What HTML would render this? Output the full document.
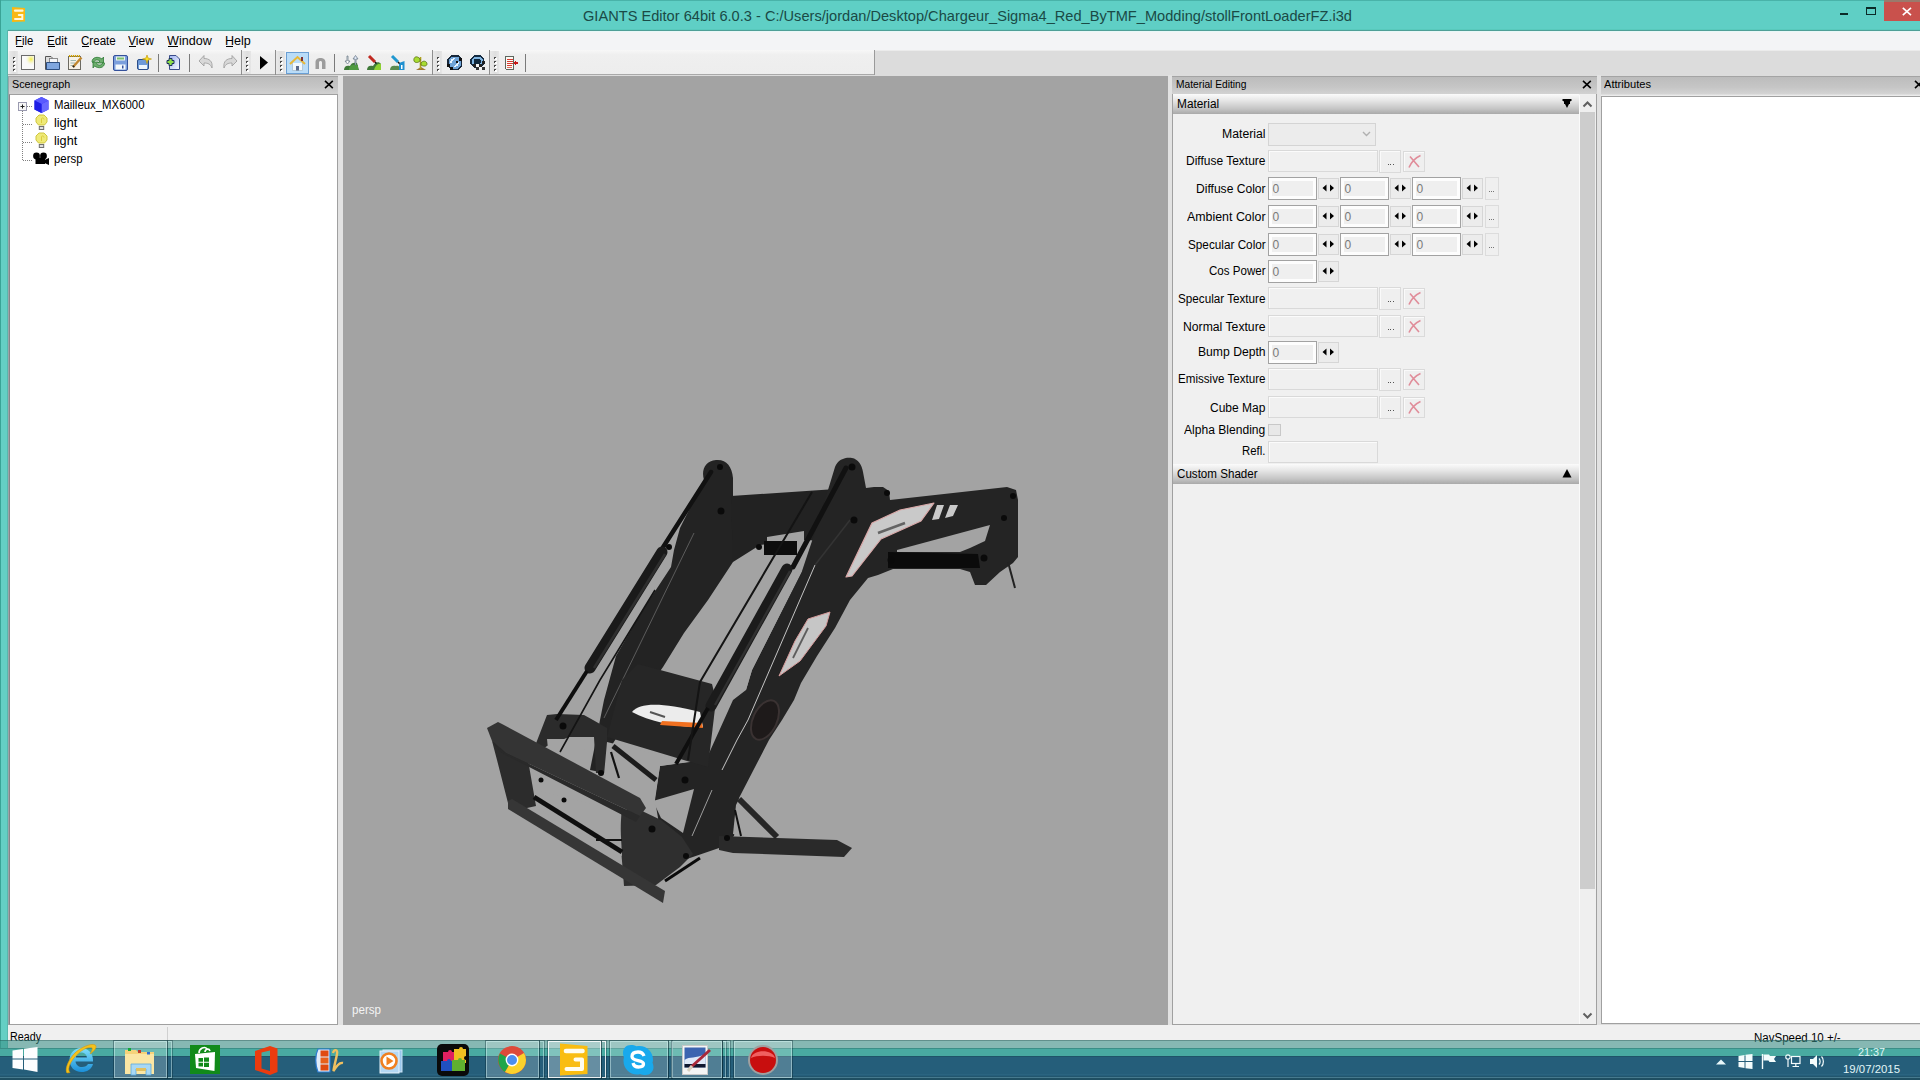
<!DOCTYPE html>
<html><head><meta charset="utf-8">
<style>
*{margin:0;padding:0;box-sizing:border-box}
html,body{width:1920px;height:1080px;overflow:hidden;background:#245d7a;font-family:"Liberation Sans",sans-serif;font-size:12px;color:#000;position:relative}
.a{position:absolute}
.t{position:absolute;white-space:nowrap;line-height:1}
svg{position:absolute;overflow:visible}
</style></head><body>
<div class="a" style="left:0px;top:0px;width:1920px;height:30px;background:#5fcfc5"></div>
<div class="a" style="left:0px;top:0px;width:1920px;height:1px;background:#49b3a9"></div>
<div class="a" style="left:0px;top:30px;width:8px;height:1018px;background:#64cfc4"></div>
<div class="a" style="left:0px;top:0px;width:1px;height:1048px;background:#3aa396"></div>
<div class="a" style="left:7px;top:30px;width:1px;height:1018px;background:#58b8ad"></div>
<svg style="left:11px;top:6px" width="16" height="17" viewBox="0 0 16 17">
 <path d="M1 1 L14 2 V15.5 L1 16 Z" fill="#f8b814"/>
 <path d="M4 4.7 H11.5" stroke="#fff6d8" stroke-width="2.2" stroke-linecap="round"/>
 <path d="M7.8 9 H11.3 V13 H4" stroke="#fff6d8" stroke-width="2" fill="none" stroke-linecap="round"/>
</svg>
<div class="t" id="t0" style="left:583.00px;top:7.97px;font-size:15px;color:#1a4a46;transform:scaleX(0.9740);transform-origin:0 0;">GIANTS Editor 64bit 6.0.3 - C:/Users/jordan/Desktop/Chargeur_Sigma4_Red_ByTMF_Modding/stollFrontLoaderFZ.i3d</div>
<div class="a" style="left:1840px;top:13px;width:8px;height:2px;background:#0b2b28"></div>
<div class="a" style="left:1866px;top:7px;width:10px;height:8px;border:1.5px solid #0b2b28;border-top-width:2px"></div>
<div class="a" style="left:1884px;top:0px;width:36px;height:21px;background:#c9514c"></div>
<div class="a" style="left:1884px;top:0px;width:36px;height:2px;background:#9a7a6c"></div>
<svg style="left:1902px;top:7px" width="10" height="9" viewBox="0 0 10 9"><path d="M0.8 0.8 L9 8.2 M9 0.8 L0.8 8.2" stroke="#fff" stroke-width="1.6"/></svg>
<div class="a" style="left:8px;top:30px;width:1912px;height:20px;background:#f3f4f6"></div>
<div class="a" style="left:8px;top:29px;width:1912px;height:1px;background:#58c9bc"></div>
<div class="a" style="left:8px;top:30px;width:1912px;height:1px;background:#4f9f97"></div>
<div class="a" style="left:8px;top:31px;width:1912px;height:1px;background:#e8f8f8"></div>
<div class="t" id="t1" style="left:14.80px;top:34.68px;font-size:12px;color:#000;transform:scaleX(0.9409);transform-origin:0 0;">File</div>
<div class="a" style="left:16px;top:46px;width:7px;height:1px;background:#000"></div>
<div class="t" id="t2" style="left:46.50px;top:34.68px;font-size:12px;color:#000;transform:scaleX(0.9764);transform-origin:0 0;">Edit</div>
<div class="a" style="left:48px;top:46px;width:7px;height:1px;background:#000"></div>
<div class="t" id="t3" style="left:80.60px;top:34.68px;font-size:12px;color:#000;transform:scaleX(0.9658);transform-origin:0 0;">Create</div>
<div class="a" style="left:82px;top:46px;width:7px;height:1px;background:#000"></div>
<div class="t" id="t4" style="left:128.00px;top:34.68px;font-size:12px;color:#000;transform:scaleX(1.0001);transform-origin:0 0;">View</div>
<div class="a" style="left:129px;top:46px;width:7px;height:1px;background:#000"></div>
<div class="t" id="t5" style="left:167.00px;top:34.68px;font-size:12px;color:#000;transform:scaleX(1.0495);transform-origin:0 0;">Window</div>
<div class="a" style="left:168px;top:46px;width:10px;height:1px;background:#000"></div>
<div class="t" id="t6" style="left:225.00px;top:34.68px;font-size:12px;color:#000;transform:scaleX(1.0451);transform-origin:0 0;">Help</div>
<div class="a" style="left:226px;top:46px;width:7px;height:1px;background:#000"></div>
<div class="a" style="left:8px;top:50px;width:1912px;height:26px;background:#dcdcdc"></div>
<div class="a" style="left:875px;top:50px;width:1045px;height:1px;background:#ebebeb"></div>
<div class="a" style="left:8px;top:50px;width:867px;height:25px;background:linear-gradient(#f7f7f7,#efefef 20%,#ededed)"></div>
<div class="a" style="left:8px;top:74px;width:867px;height:1px;background:#a9a9a9"></div>
<div class="a" style="left:874px;top:50px;width:1px;height:25px;background:#9a9a9a"></div>
<div class="a" style="left:9px;top:51px;width:9px;height:23px;background:linear-gradient(90deg,#e9e9e9,#dedede 60%,#e6e6e6)"></div>
<div class="a" style="left:13px;top:57px;width:2px;height:2px;background:#4a4a4a"></div>
<div class="a" style="left:14px;top:58px;width:2px;height:2px;background:#fff"></div>
<div class="a" style="left:13px;top:61px;width:2px;height:2px;background:#4a4a4a"></div>
<div class="a" style="left:14px;top:62px;width:2px;height:2px;background:#fff"></div>
<div class="a" style="left:13px;top:65px;width:2px;height:2px;background:#4a4a4a"></div>
<div class="a" style="left:14px;top:66px;width:2px;height:2px;background:#fff"></div>
<div class="a" style="left:13px;top:69px;width:2px;height:2px;background:#4a4a4a"></div>
<div class="a" style="left:14px;top:70px;width:2px;height:2px;background:#fff"></div>
<div class="a" style="left:158px;top:54px;width:1px;height:18px;background:#7a7a7a"></div>
<div class="a" style="left:189px;top:54px;width:1px;height:18px;background:#7a7a7a"></div>
<div class="a" style="left:241px;top:50px;width:1px;height:25px;background:#8e8e8e"></div>
<div class="a" style="left:242px;top:51px;width:9px;height:23px;background:linear-gradient(90deg,#e9e9e9,#dedede 60%,#e6e6e6)"></div>
<div class="a" style="left:246px;top:57px;width:2px;height:2px;background:#4a4a4a"></div>
<div class="a" style="left:247px;top:58px;width:2px;height:2px;background:#fff"></div>
<div class="a" style="left:246px;top:61px;width:2px;height:2px;background:#4a4a4a"></div>
<div class="a" style="left:247px;top:62px;width:2px;height:2px;background:#fff"></div>
<div class="a" style="left:246px;top:65px;width:2px;height:2px;background:#4a4a4a"></div>
<div class="a" style="left:247px;top:66px;width:2px;height:2px;background:#fff"></div>
<div class="a" style="left:246px;top:69px;width:2px;height:2px;background:#4a4a4a"></div>
<div class="a" style="left:247px;top:70px;width:2px;height:2px;background:#fff"></div>
<div class="a" style="left:275px;top:50px;width:1px;height:25px;background:#8e8e8e"></div>
<div class="a" style="left:276px;top:51px;width:9px;height:23px;background:linear-gradient(90deg,#e9e9e9,#dedede 60%,#e6e6e6)"></div>
<div class="a" style="left:280px;top:57px;width:2px;height:2px;background:#4a4a4a"></div>
<div class="a" style="left:281px;top:58px;width:2px;height:2px;background:#fff"></div>
<div class="a" style="left:280px;top:61px;width:2px;height:2px;background:#4a4a4a"></div>
<div class="a" style="left:281px;top:62px;width:2px;height:2px;background:#fff"></div>
<div class="a" style="left:280px;top:65px;width:2px;height:2px;background:#4a4a4a"></div>
<div class="a" style="left:281px;top:66px;width:2px;height:2px;background:#fff"></div>
<div class="a" style="left:280px;top:69px;width:2px;height:2px;background:#4a4a4a"></div>
<div class="a" style="left:281px;top:70px;width:2px;height:2px;background:#fff"></div>
<div class="a" style="left:334px;top:54px;width:1px;height:18px;background:#7a7a7a"></div>
<div class="a" style="left:432px;top:50px;width:1px;height:25px;background:#8e8e8e"></div>
<div class="a" style="left:433px;top:51px;width:9px;height:23px;background:linear-gradient(90deg,#e9e9e9,#dedede 60%,#e6e6e6)"></div>
<div class="a" style="left:437px;top:57px;width:2px;height:2px;background:#4a4a4a"></div>
<div class="a" style="left:438px;top:58px;width:2px;height:2px;background:#fff"></div>
<div class="a" style="left:437px;top:61px;width:2px;height:2px;background:#4a4a4a"></div>
<div class="a" style="left:438px;top:62px;width:2px;height:2px;background:#fff"></div>
<div class="a" style="left:437px;top:65px;width:2px;height:2px;background:#4a4a4a"></div>
<div class="a" style="left:438px;top:66px;width:2px;height:2px;background:#fff"></div>
<div class="a" style="left:437px;top:69px;width:2px;height:2px;background:#4a4a4a"></div>
<div class="a" style="left:438px;top:70px;width:2px;height:2px;background:#fff"></div>
<div class="a" style="left:489px;top:50px;width:1px;height:25px;background:#8e8e8e"></div>
<div class="a" style="left:490px;top:51px;width:9px;height:23px;background:linear-gradient(90deg,#e9e9e9,#dedede 60%,#e6e6e6)"></div>
<div class="a" style="left:494px;top:57px;width:2px;height:2px;background:#4a4a4a"></div>
<div class="a" style="left:495px;top:58px;width:2px;height:2px;background:#fff"></div>
<div class="a" style="left:494px;top:61px;width:2px;height:2px;background:#4a4a4a"></div>
<div class="a" style="left:495px;top:62px;width:2px;height:2px;background:#fff"></div>
<div class="a" style="left:494px;top:65px;width:2px;height:2px;background:#4a4a4a"></div>
<div class="a" style="left:495px;top:66px;width:2px;height:2px;background:#fff"></div>
<div class="a" style="left:494px;top:69px;width:2px;height:2px;background:#4a4a4a"></div>
<div class="a" style="left:495px;top:70px;width:2px;height:2px;background:#fff"></div>
<div class="a" style="left:525px;top:54px;width:1px;height:18px;background:#7a7a7a"></div>

<svg style="left:20px;top:54px" width="17" height="17" viewBox="0 0 17 17">
 <defs><radialGradient id="gnew" cx="0.75" cy="0.25" r="0.5"><stop offset="0" stop-color="#f4f040"/><stop offset="1" stop-color="#f4f4f8" stop-opacity="0"/></radialGradient></defs>
 <rect x="1.5" y="1.5" width="13" height="14" fill="#fafafa" stroke="#6b6b6b"/>
 <rect x="2" y="2" width="12" height="13" fill="url(#gnew)"/>
</svg>
<svg style="left:44px;top:54px" width="17" height="17" viewBox="0 0 17 17">
 <path d="M1.5 2.5 H7 L8 3.5 V15.5 H1.5 Z" fill="#dcdcdc" stroke="#555"/>
 <rect x="5.5" y="4.5" width="8" height="7" fill="#f4f6fa" stroke="#777" stroke-width="0.8"/>
 <path d="M2.5 8.5 H15.5 V15.5 H2.5 Z" fill="#7fa6df" stroke="#2d4e80"/>
</svg>
<svg style="left:67px;top:54px" width="17" height="17" viewBox="0 0 17 17">
 <rect x="1.5" y="2.5" width="12" height="13" fill="#f6f2e8" stroke="#6c6a62"/>
 <path d="M2 2 H13" stroke="#d0a000" stroke-width="2" stroke-dasharray="1.2 0.8"/>
 <path d="M3.5 6.5 H9 M3.5 9 H8 M3.5 11.5 H7" stroke="#8aa8a0" stroke-width="0.8"/>
 <path d="M6 13 L14.5 3.5" stroke="#c08830" stroke-width="2.4"/><path d="M6 13 L7 11.8" stroke="#222" stroke-width="2"/>
</svg>
<svg style="left:90px;top:54px" width="17" height="17" viewBox="0 0 17 17">
 <path d="M2 8 C2 3 8 2 12 5 L13.5 3 V9 H8 L10 7 C7 5 4 6 3.5 9 Z" fill="#6cae6c" stroke="#2e7a36" stroke-width="0.8"/>
 <path d="M14.5 9 C14.5 14 8.5 15 4.5 12 L3 14 V8 H8.5 L6.5 10 C9.5 12 12.5 11 13 8 Z" fill="#6cae6c" stroke="#2e7a36" stroke-width="0.8"/>
</svg>
<svg style="left:112px;top:54px" width="17" height="17" viewBox="0 0 17 17">
 <rect x="1.5" y="1.5" width="14" height="15" rx="1.5" fill="#7b9edc" stroke="#34509a"/>
 <rect x="4" y="2.5" width="9" height="4" fill="#eef4ee"/><rect x="5" y="3.5" width="7" height="2" fill="#7cc070"/>
 <rect x="3.5" y="10.5" width="10" height="5" fill="#f4f8fc"/><rect x="10" y="11.5" width="1.5" height="3" fill="#34509a"/>
</svg>
<svg style="left:136px;top:54px" width="17" height="17" viewBox="0 0 17 17">
 <rect x="1.5" y="5.5" width="11" height="10" rx="1.5" fill="#6e9ad8" stroke="#2c4e88"/>
 <rect x="3" y="11" width="8" height="4" fill="#eef6fc"/>
 <path d="M11 1 L12 4 L15.5 5 L12 6 L11 9.5 L10 6 L6.5 5 L10 4 Z" fill="#f8e020" stroke="#c09000" stroke-width="0.6"/>
</svg>
<svg style="left:166px;top:54px" width="17" height="17" viewBox="0 0 17 17">
 <defs><linearGradient id="gimp" x1="0" y1="0" x2="1" y2="1"><stop offset="0" stop-color="#9fb2f0"/><stop offset="1" stop-color="#f8fbff"/></linearGradient></defs>
 <path d="M3.5 1.5 H10 L13.5 5 V15.5 H3.5 Z" fill="url(#gimp)" stroke="#3a4c8a"/>
 <path d="M4 4.5 H6 V2.5 H9 V4.5 H11 V7.5 H9 V9.5 H6 V7.5 H4 Z" transform="translate(-3,2)" fill="#8ee04a" stroke="#1e3060" stroke-width="1"/>
</svg>
<svg style="left:198px;top:54px" width="17" height="17" viewBox="0 0 17 17">
 <path d="M1 7 L6 1.5 V4.5 C11 4.5 15 7 14 14 C12.5 10 10 9 6 9 V12 Z" fill="#d8d8d8" stroke="#9a9a9a" stroke-width="0.8"/>
</svg>
<svg style="left:221px;top:54px" width="17" height="17" viewBox="0 0 17 17">
 <path d="M16 7 L11 1.5 V4.5 C6 4.5 2 7 3 14 C4.5 10 7 9 11 9 V12 Z" fill="#d8d8d8" stroke="#9a9a9a" stroke-width="0.8"/>
</svg>
<svg style="left:259px;top:55px" width="10" height="16" viewBox="0 0 10 16"><path d="M1 1 L9 7.5 L1 14.5 Z" fill="#000"/></svg>
<div class="a" style="left:286px;top:52px;width:23px;height:22px;background:#b9dcf8;border:1px solid #6a9fd4"></div>
<svg style="left:289px;top:55px" width="17" height="17" viewBox="0 0 17 17">
 <path d="M3.5 8 V15.5 H13.5 V8" fill="#f2f8fc" stroke="#aac0d0" stroke-width="0.8"/>
 <path d="M1 9 L8.5 2 L16 9" fill="none" stroke="#e8b838" stroke-width="2"/>
 <rect x="12" y="2" width="2" height="4" fill="#803030"/>
 <rect x="7" y="11" width="3" height="4.5" fill="#5a6a8a"/>
</svg>
<svg style="left:315px;top:57px" width="11" height="12" viewBox="0 0 11 12"><path d="M0.5 12 V5 C0.5 -0.5 10.5 -0.5 10.5 5 V12 H7 V5.5 C7 3.5 4 3.5 4 5.5 V12 Z" fill="#9c9c9c"/></svg>
<svg style="left:343px;top:54px" width="17" height="17" viewBox="0 0 17 17">
 <path d="M1 16 C1 12 4 11 7 12 C8 9 11 8 14 9 L16 16 Z" fill="#3f7a38"/><path d="M6 14 C7 11 11 10 15 11 V16 H6Z" fill="#4f9a40"/>
 <path d="M4 2 V7 H2 L4.5 10 L7 7 H5 V2 Z" fill="#fff" stroke="#607080" stroke-width="0.7"/>
 <path d="M12 11 V5 H10 L12.5 1.5 L15 5 H13 V11 Z" fill="#dfe8f8" stroke="#607080" stroke-width="0.7"/>
</svg>
<svg style="left:366px;top:54px" width="17" height="17" viewBox="0 0 17 17">
 <path d="M1 16 C1 12 4 11 7 12 C9 8 13 7 15 10 V16 Z" fill="#3f7a38"/><path d="M8 16 C9 12 12 9 15 10 V16 Z" fill="#8cd030"/>
 <path d="M3 2 L9 8" stroke="#c02820" stroke-width="3"/><path d="M9 8 L10.5 9.5" stroke="#111" stroke-width="1.5"/>
</svg>
<svg style="left:389px;top:54px" width="17" height="17" viewBox="0 0 17 17">
 <path d="M1 16 C1 12 4 11 7 12 C9 11 11 12 11 16 Z" fill="#5a8a50"/>
 <path d="M10 9 L15.5 7 V16 H10 Z" fill="#2090d0"/><rect x="12" y="11" width="1.5" height="4" fill="#fff"/>
 <path d="M3 2 L9 8" stroke="#2098d0" stroke-width="3"/><path d="M9 8 L10.5 9.5" stroke="#111" stroke-width="1.5"/>
</svg>
<svg style="left:412px;top:54px" width="17" height="17" viewBox="0 0 17 17">
 <path d="M4 16 L9 13 L14 16 Z" fill="#a07830"/>
 <path d="M8.5 15 V3" stroke="#b0a020" stroke-width="1.6"/>
 <path d="M8 5 C5 1 1 3 2 7 C3 9 6 9 8 7 Z" fill="#a8dc30" stroke="#587010" stroke-width="0.8"/>
 <path d="M9 9 C11 6 15 7 15 10 C15 12 12 13 9 11 Z" fill="#a8dc30" stroke="#587010" stroke-width="0.8"/>
</svg>
<svg style="left:446px;top:54px" width="17" height="17" viewBox="0 0 17 17" shape-rendering="crispEdges">
 <path d="M5 1 H12 L16 5 V12 L12 16 H5 L1 12 V5 Z" fill="#18283a"/>
 <path d="M5.5 2.5 H11.5 L14.5 5.5 V11.5 L11.5 14.5 H5.5 L2.5 11.5 V5.5 Z" fill="#6fa4d8"/>
 <path d="M4 9 C4 6 6 4 9 4 L8 6 C6.5 6 6 7.5 6 9 Z M13 8 C13 11 11 13 8 13 L9 11 C10.5 11 11 9.5 11 8 Z" fill="#e8f4ff"/>
 <rect x="1" y="10" width="3" height="3" fill="#111"/><rect x="4" y="13" width="3" height="3" fill="#111"/>
 <rect x="13" y="4" width="3" height="3" fill="#111"/><rect x="10" y="7" width="2" height="2" fill="#111"/>
</svg>
<svg style="left:469px;top:54px" width="17" height="17" viewBox="0 0 17 17" shape-rendering="crispEdges">
 <path d="M5 1 H11 L15 5 V10 L11 14 H5 L1 10 V5 Z" fill="#142a40"/>
 <path d="M5.5 2.5 H10.5 L13.5 5.5 V9.5 L10.5 12.5 H5.5 L2.5 9.5 V5.5 Z" fill="#80b4e0"/>
 <path d="M6 4.5 H10 L11.5 6 V9 L10 10.5 H6 L4.5 9 V6 Z" fill="#10283c"/>
 <rect x="4" y="10" width="3" height="3" fill="#222"/><rect x="7" y="13" width="3" height="3" fill="#333"/><rect x="10" y="10" width="3" height="3" fill="#222"/><rect x="13" y="13" width="3" height="3" fill="#333"/><rect x="13" y="7" width="3" height="3" fill="#222"/>
 <rect x="7" y="10" width="3" height="3" fill="#f4f4f4"/><rect x="10" y="13" width="3" height="3" fill="#f4f4f4"/>
</svg>
<svg style="left:503px;top:55px" width="17" height="17" viewBox="0 0 17 17" shape-rendering="crispEdges">
 <path d="M2.5 1.5 H10.5 V14.5 H3.5 L2.5 13.5 Z" fill="#fbfaf4" stroke="#5e665e"/>
 <rect x="4" y="4" width="6" height="1" fill="#d83a30"/><rect x="4" y="6" width="6" height="1" fill="#d83a30"/><rect x="4" y="8" width="6" height="1" fill="#d83a30"/><rect x="4" y="10" width="5" height="1" fill="#d83a30"/><rect x="4" y="12" width="5" height="1" fill="#e06a60"/>
 <path d="M10 8 L13 5 V7 H15 V9 H13 V11 Z" fill="#c81818"/>
</svg>

<div class="a" style="left:8px;top:75px;width:1912px;height:965px;background:#dcdcdc"></div>
<div class="a" style="left:338px;top:75px;width:5px;height:950px;background:#e2e2e2"></div>
<div class="a" style="left:1168px;top:75px;width:4px;height:950px;background:#e2e2e2"></div>
<div class="a" style="left:1597px;top:75px;width:4px;height:950px;background:#e2e2e2"></div>
<div class="a" style="left:9px;top:76px;width:329px;height:18px;background:linear-gradient(#bcbcbc,#c6c6c6 60%,#d2d2d2);border-top:1px solid #a4a4a4"></div>
<div class="t" id="t7" style="left:11.70px;top:78.59px;font-size:11px;color:#000;transform:scaleX(0.9810);transform-origin:0 0;">Scenegraph</div>
<svg style="left:324px;top:80px" width="10" height="9" viewBox="0 0 10 9"><path d="M1 0.8 L8.8 8.2 M8.8 0.8 L1 8.2" stroke="#000" stroke-width="1.6"/></svg>
<div class="a" style="left:9px;top:94px;width:329px;height:931px;background:#fff;border:1px solid #a0a0a0;border-left-color:#878488"></div>
<div class="a" style="left:8px;top:76px;width:1px;height:949px;background:#98a6aa"></div>
<div class="a" style="left:343px;top:76px;width:825px;height:949px;background:#a3a3a3"></div>

<svg style="left:343px;top:76px" width="825" height="949" viewBox="343 76 825 949">
<g stroke-linejoin="round">
 <!-- left (rear) arm -->
 <path d="M704 480 C701 470 705 461 716 460 C726 459 732 466 733 478 L733 562 L708 600 L684 633 L663 667 L640 700 L612 745 L600 772 L590 770 L604 700 L616 656 L642 611 L671 567 L674 550 L680 528 L694 500 Z" fill="#232323"/>
 <!-- crossbeam -->
 <path d="M731 496 L836 489 L836 541 L800 540 L760 545 L733 562 Z" fill="#222"/>
 <path d="M767 537 L804 531 L804 541 L767 541 Z" fill="#a3a3a3"/>
 <path d="M764 541 L797 541 L797 555 L764 555 Z" fill="#0d0d0d"/>
 <!-- right arm + boom + right linkage -->
 <path d="M828 490 L835 467 C838 459 846 457 852 458 C858 459 862 465 863 472 L866 488 L874 487 L883 487 L889 491 L890 500 L1007 487 L1016 490 L1018 500 L1018 557 L1013 563 L1000 572 L986 585 L975 585 L970 572 L960 569 L893 569 L878 575 L868 578 L850 600 L835 628 L817 656 L801 683 L794 700 L782 720 L769 740 L739 798 L734 836 L719 848 L687 859 L674 848 L660 830 L655 800 L660 766 L690 762 L706 760 L733 700 L746 690 L752 670 L802 571 L812 541 Z" fill="#242424"/>
 <!-- gap under boom + cross tube -->
 <path d="M897 550 L990 525 L985 541 L970 548 L960 552 L897 552 Z" fill="#a3a3a3"/>
 <path d="M888 552 L978 554 L980 568 L888 568 Z" fill="#0b0b0b"/>
 <!-- strip between right cylinder and arm -->
 <path d="M791 573 L802 571 L752 670 L746 690 L724 692 L741 660 Z" fill="#a3a3a3"/>
 <!-- highlights on right arm -->
 <path d="M815 565 L748 720 L737 740 L722 770" stroke="#e0e0e0" stroke-width="1" fill="none" opacity="0.85"/>
 <path d="M712 790 L692 836" stroke="#d0d0d0" stroke-width="1" opacity="0.7"/>
 <path d="M694 533 L604 718" stroke="#9a9a9a" stroke-width="0.8" opacity="0.6"/>
 <path d="M850 520 L815 565" stroke="#343434" stroke-width="1.5" fill="none"/>
 <!-- decals -->
 <path d="M846 577 L872 523 L900 510 L934 503 L921 521 L881 539 L852 576 Z" fill="#c9c9c9" stroke="#d9a8a8" stroke-width="1.2"/>
 <path d="M932 520 L937 505 L944 505 L939 519 Z M945 518 L950 505 L958 505 L953 516 Z" fill="#c9c9c9"/>
 <path d="M878 533 L905 523" stroke="#3a3a3a" stroke-width="2.5" opacity="0.7"/>
 <path d="M779 676 L795 641 L808 619 L830 612 L826 626 L800 661 Z" fill="#c6c6c6" stroke="#d69a9a" stroke-width="1"/>
 <path d="M793 658 L808 628" stroke="#444" stroke-width="1.8" opacity="0.8"/>
 <!-- round cover -->
 <ellipse cx="765" cy="720" rx="12" ry="21" transform="rotate(25 765 720)" fill="#1e1a1a" stroke="#3a3232" stroke-width="2"/>
 <!-- lower crossmember block -->
 <path d="M638 664 L712 684 L716 700 L708 767 L687 761 L607 737 L622 680 Z" fill="#262626"/>
 <path d="M632 712 C640 703 660 702 700 712 L703 727 C680 728 650 722 632 712 Z" fill="#ececec"/>
 <path d="M660 725 L703 728 L702 723 L662 721 Z" fill="#f07020"/>
 <path d="M650 712 L665 717" stroke="#555" stroke-width="2"/>
 <!-- left linkage -->
 <path d="M535 746 L547 715 L557 714 L584 715 L593 720 L607 728 L607 773 L596 773 L594 737 L569 737 L547 746 L539 752 Z" fill="#2b2b2b"/>
  <!-- mounting frame -->
 <path d="M492 741 L528 760 L536 806 L518 810 L508 803 L497 760 Z" fill="#2c2c2c"/>
 <path d="M622 804 L640 810 L661 820 L682 837 L693 854 L680 867 L656 885 L624 886 L620 836 Z" fill="#2f2f2f"/>
 <!-- gaps -->
 <path d="M607 742 L687 762 L660 766 L655 797 L640 805 L620 812 L600 800 L604 775 Z" fill="#a3a3a3"/>
 <path d="M536 790 L600 806 L620 818 L622 856 L536 808 Z" fill="#a3a3a3"/>
 <path d="M547 739 L593 739 L575 761 L548 749 Z" fill="#a3a3a3"/>
 <path d="M653 801 L694 789 L683 833 L661 818 Z" fill="#a3a3a3"/>
 <path d="M736 805 L739 799 L762 836 L733 834 Z" fill="#a3a3a3"/>
 <path d="M487 728 L498 722 L502 724 L640 798 L646 808 L640 816 L506 753 L492 741 Z" fill="#343434"/>
 <path d="M492 741 L506 753 L640 816 L636 822 L500 752 Z" fill="#2a2a2a"/>
 <path d="M508 801 L512 799 L665 891 L663 903 L508 809 Z" fill="#363636"/>
 <!-- right foot -->
 <path d="M719 836 L837 840 L852 848 L844 857 L733 853 L719 850 Z" fill="#2a2a2a"/>
 <!-- cylinders -->
 <path d="M711 472 L660 552" stroke="#111" stroke-width="4.5" stroke-linecap="round"/>
 <path d="M662 552 L590 668" stroke="#1a1a1a" stroke-width="11" stroke-linecap="round"/>
 <path d="M665 554 L594 668" stroke="#2e2e2e" stroke-width="2.5"/>
 <path d="M587 671 L556 720" stroke="#0e0e0e" stroke-width="4"/>
 <path d="M846 468 L793 567" stroke="#111" stroke-width="5" stroke-linecap="round"/>
 <path d="M787 569 L711 706" stroke="#1b1b1b" stroke-width="11" stroke-linecap="round"/>
 <path d="M790 571 L715 705" stroke="#303030" stroke-width="2.5"/>
 <path d="M708 708 L676 764" stroke="#0e0e0e" stroke-width="4"/>
 <!-- hoses -->
 <path d="M812 492 L700 682 L688 760" stroke="#141414" stroke-width="2" fill="none"/>
 <path d="M655 590 L600 680 L560 752" stroke="#141414" stroke-width="1.6" fill="none"/>
 <!-- struts/rods -->
 <path d="M613 746 L656 780" stroke="#1c1c1c" stroke-width="5"/>
 <path d="M611 752 L619 778" stroke="#111" stroke-width="2.2"/>
 <path d="M739 799 L777 837" stroke="#262626" stroke-width="6"/>
 <path d="M735 810 L741 836" stroke="#111" stroke-width="2"/>
 <path d="M534 797 L622 852" stroke="#0f0f0f" stroke-width="5"/>
 <path d="M596 840 L622 840" stroke="#111" stroke-width="2"/>
 <path d="M1008 562 L1015 588" stroke="#222" stroke-width="2"/>
 <path d="M665 881 L700 858" stroke="#0a0a0a" stroke-width="3"/>
 <!-- bolts -->
 <g fill="#0a0a0a">
  <circle cx="720" cy="467" r="3"/><circle cx="721" cy="511" r="3.5"/><circle cx="669" cy="547" r="3"/><circle cx="759" cy="547" r="3"/>
  <circle cx="852" cy="467" r="3.5"/><circle cx="854" cy="520" r="3.5"/><circle cx="887" cy="493" r="3"/>
  <circle cx="891" cy="560" r="3.5"/><circle cx="984" cy="558" r="3.5"/><circle cx="1013" cy="496" r="3"/><circle cx="1004" cy="518" r="3"/>
  <circle cx="563" cy="726" r="3.5"/><circle cx="601" cy="773" r="3"/><circle cx="652" cy="829" r="3.5"/><circle cx="686" cy="856" r="3"/>
  <circle cx="685" cy="780" r="3.5"/><circle cx="727" cy="838" r="3"/><circle cx="541" cy="780" r="2.5"/><circle cx="564" cy="800" r="2.5"/>
 </g>
</g>
</svg>

<div class="t" id="t8" style="left:351.80px;top:1004.04px;font-size:12px;color:#f4f4f4;transform:scaleX(0.9657);transform-origin:0 0;">persp</div>
<div class="a" style="left:1172px;top:76px;width:425px;height:18px;background:linear-gradient(#bcbcbc,#c6c6c6 60%,#d2d2d2);border-top:1px solid #a4a4a4"></div>
<div class="t" id="t9" style="left:1175.60px;top:78.59px;font-size:11px;color:#000;transform:scaleX(0.9297);transform-origin:0 0;">Material Editing</div>
<svg style="left:1582px;top:80px" width="10" height="9" viewBox="0 0 10 9"><path d="M1 0.8 L8.8 8.2 M8.8 0.8 L1 8.2" stroke="#000" stroke-width="1.6"/></svg>
<div class="a" style="left:1172px;top:94px;width:425px;height:931px;background:#f0f0f0;border:1px solid #a0a0a0;border-top:none"></div>
<div class="a" style="left:1601px;top:76px;width:319px;height:20px;background:linear-gradient(#bcbcbc,#c6c6c6 55%,#d3d3d3 88%,#f2f2f2);border-top:1px solid #a4a4a4"></div>
<div class="t" id="t10" style="left:1604.00px;top:79.09px;font-size:11px;color:#000;transform:scaleX(1.0114);transform-origin:0 0;">Attributes</div>
<svg style="left:1914px;top:80px" width="10" height="9" viewBox="0 0 10 9"><path d="M1 0.8 L8.8 8.2 M8.8 0.8 L1 8.2" stroke="#000" stroke-width="1.6"/></svg>
<div class="a" style="left:1601px;top:96px;width:330px;height:928px;background:#fff;border:1px solid #a0a0a0"></div>
<div class="a" style="left:8px;top:1025px;width:1912px;height:23px;background:#f0f0f0"></div>
<div class="a" style="left:167px;top:1027px;width:1px;height:13px;background:#d0d0d0"></div>
<div class="t" id="t11" style="left:10.00px;top:1031.24px;font-size:12px;color:#000;transform:scaleX(0.8937);transform-origin:0 0;">Ready</div>
<div class="t" id="t12" style="left:1754.00px;top:1032.14px;font-size:12px;color:#000;transform:scaleX(0.9590);transform-origin:0 0;">NavSpeed 10 +/-</div>
<div class="a" style="left:0px;top:1048px;width:1920px;height:8px;background:#5fcfc5"></div>
<div class="a" style="left:0;top:1040px;width:1920px;height:16px;background:rgba(59,144,136,0.586)"></div>
<div class="a" style="left:0px;top:1040px;width:1920px;height:1px;background:rgba(30,70,70,0.35)"></div>
<div class="a" style="left:0px;top:1048px;width:1920px;height:1px;background:rgba(20,60,60,0.25)"></div>
<div class="a" style="left:0px;top:1056px;width:1920px;height:24px;background:#255e7a"></div>
<div class="a" style="left:0px;top:1056px;width:1920px;height:1px;background:#1f5468"></div>
<div class="a" style="left:0px;top:1074px;width:1920px;height:1px;background:#2a6480"></div>
<div class="a" style="left:0px;top:1076px;width:1920px;height:1px;background:#22566e"></div>
<div class="a" style="left:0px;top:1077px;width:1920px;height:1px;background:#467a8e"></div>
<div class="a" style="left:0px;top:1078px;width:1920px;height:2px;background:#1f4f62"></div>
<div class="a" style="left:114px;top:1041px;width:53px;height:37px;background:rgba(255,255,255,0.20);border:1px solid rgba(220,250,250,0.45);box-shadow:0 0 0 1px rgba(0,30,40,0.35)"></div>
<div class="a" style="left:168px;top:1041px;width:4px;height:37px;border:1px solid rgba(220,250,250,0.45);border-left:none;box-shadow:0 0 0 1px rgba(0,30,40,0.3)"></div>
<div class="a" style="left:486px;top:1041px;width:53px;height:37px;background:rgba(255,255,255,0.20);border:1px solid rgba(220,250,250,0.45);box-shadow:0 0 0 1px rgba(0,30,40,0.35)"></div>
<div class="a" style="left:540px;top:1041px;width:4px;height:37px;border:1px solid rgba(220,250,250,0.45);border-left:none;box-shadow:0 0 0 1px rgba(0,30,40,0.3)"></div>
<div class="a" style="left:548px;top:1041px;width:53px;height:37px;background:rgba(255,255,255,0.30);border:1px solid rgba(255,255,255,0.85);box-shadow:0 0 0 1px rgba(0,30,40,0.35)"></div>
<div class="a" style="left:602px;top:1041px;width:4px;height:37px;border:1px solid rgba(255,255,255,0.85);border-left:none;box-shadow:0 0 0 1px rgba(0,30,40,0.3)"></div>
<div class="a" style="left:610px;top:1041px;width:58px;height:37px;background:rgba(255,255,255,0.20);border:1px solid rgba(220,250,250,0.45);box-shadow:0 0 0 1px rgba(0,30,40,0.35)"></div>
<div class="a" style="left:669px;top:1041px;width:3px;height:37px;border:1px solid rgba(220,250,250,0.45);border-left:none;box-shadow:0 0 0 1px rgba(0,30,40,0.3)"></div>
<div class="a" style="left:672px;top:1041px;width:50px;height:37px;background:rgba(255,255,255,0.20);border:1px solid rgba(220,250,250,0.45);box-shadow:0 0 0 1px rgba(0,30,40,0.35)"></div>
<div class="a" style="left:723px;top:1041px;width:3px;height:37px;border:1px solid rgba(220,250,250,0.45);border-left:none;box-shadow:0 0 0 1px rgba(0,30,40,0.3)"></div>
<div class="a" style="left:723px;top:1041px;width:7px;height:37px;border:1px solid rgba(220,250,250,0.45);border-left:none;box-shadow:0 0 0 1px rgba(0,30,40,0.3)"></div>
<div class="a" style="left:734px;top:1041px;width:58px;height:37px;background:rgba(255,255,255,0.20);border:1px solid rgba(220,250,250,0.45);box-shadow:0 0 0 1px rgba(0,30,40,0.35)"></div>

<svg style="left:11px;top:1046px" width="28" height="28" viewBox="0 0 28 28">
 <path d="M1.5 4.5 L12 3 V12.5 H1.5 Z M13 2.8 L26.5 1 V12.5 H13 Z M1.5 13.5 H12 V23.5 L1.5 22 Z M13 13.5 H26.5 V26 L13 23.6 Z" fill="#fdfdff"/>
</svg>
<svg style="left:64px;top:1042px" width="34" height="34" viewBox="0 0 34 34">
 <defs><linearGradient id="gie" x1="0" y1="0" x2="0" y2="1"><stop offset="0" stop-color="#7fe0fb"/><stop offset="1" stop-color="#1b8fd8"/></linearGradient></defs>
 <path d="M17 6 C24 6 29 11 29 18 V19.5 H11.5 C12 23 14.5 25 18 25 C21 25 23 24 24 22 H29 C27.5 27.5 23 30 17.5 30 C10.5 30 5.5 25 5.5 18 C5.5 11 10.5 6 17 6 Z M11.8 15.5 H23 C22.5 12.3 20 10.5 17.3 10.5 C14.5 10.5 12.3 12.5 11.8 15.5 Z" fill="url(#gie)"/>
 <path d="M3 31 C0 27 6 13 16 7 C24 2 32 1 32 4.5 C32 7 29 10 26 12 C28 9 29 6 27.5 5.5 C24 4.5 16 8.5 10 16 C5 22 3.5 28 6 30.5 Z" fill="#f4c21a" stroke="#d89a08" stroke-width="0.6"/>
</svg>
<svg style="left:123px;top:1046px" width="34" height="30" viewBox="0 0 34 30">
 <path d="M2 4 H13 L15 6 H31 V28 H2 Z" fill="#f6d37a"/>
 <path d="M2 8 H31 V28 H2 Z" fill="#fbe6a4"/>
 <rect x="5" y="2" width="3" height="3" fill="#13a83a"/><rect x="15" y="4" width="3" height="3" fill="#c0392b"/><rect x="24" y="6" width="3" height="2.5" fill="#2f6fd0"/>
 <path d="M8 18 H28 V29 H23 V23 H13 V29 H8 Z" fill="#a8d8f4" stroke="#5aa8dc" stroke-width="0.8"/>
 <rect x="13" y="22" width="10" height="3" fill="#e0c060"/>
</svg>
<div class="a" style="left:190px;top:1045px;width:30px;height:29px;background:#118a1a"></div>
<svg style="left:190px;top:1045px" width="30" height="29" viewBox="0 0 30 29">
 <path d="M9 8 C9 3 15 1 17 4 M15 7 C15 4 19 3 20 6" stroke="#fff" stroke-width="1.6" fill="none"/>
 <path d="M5 9 L25 7 L24.5 26 L6 23 Z" fill="#fff"/>
 <path d="M8.5 13 H13 V16.8 H8.5 Z M14 12.6 H19 V16.8 H14 Z M8.5 17.8 H13 V21.5 H8.5 Z M14 17.8 H19 V22 H14 Z" fill="#118a1a"/>
</svg>
<svg style="left:253px;top:1045px" width="26" height="31" viewBox="0 0 26 31">
 <path d="M2 6 L17 1 L24.5 3.5 V27 L17 30 L2 25 Z M8.5 7.5 V23.5 L17 26 V5.5 Z" fill="#eb3b0e"/>
</svg>
<svg style="left:312px;top:1047px" width="34" height="27" viewBox="0 0 34 27">
 <path d="M6 2 C3 8 3 18 6 25 H18 V2 Z" fill="#e0ecf8" stroke="#2a7ad0" stroke-width="1.2"/>
 <rect x="8.5" y="3.5" width="8" height="6" fill="#e04a10"/><rect x="8.5" y="10.5" width="8" height="6" fill="#e8601a"/><rect x="8.5" y="17.5" width="8" height="6" fill="#e04a10"/>
 <path d="M21 6 C22 2 26 2 25 7 C24 13 22 19 21.5 24 C24 20 27 15 31 16" stroke="#f0c060" stroke-width="2.4" fill="none"/>
</svg>
<svg style="left:376px;top:1048px" width="28" height="28" viewBox="0 0 28 28">
 <rect x="7" y="2" width="19" height="22" fill="#9ac6ec" stroke="#cce4f6"/>
 <rect x="4" y="3" width="19" height="22" fill="#b4d8f4" stroke="#e8f4fc"/>
 <circle cx="13" cy="13" r="7.5" fill="#fff" stroke="#f08020" stroke-width="2.6"/>
 <path d="M10.5 8.5 L17.5 13 L10.5 17.5 Z" fill="#f08020"/>
</svg>
<div class="a" style="left:437px;top:1044px;width:32px;height:32px;background:#0a0a0a;border-radius:5px"></div>
<svg style="left:437px;top:1044px" width="32" height="32" viewBox="0 0 32 32">
 <path d="M6 8 h5 a2 2 0 0 1 4 0 h4 v5 a2 2 0 0 1 0 4 v4 h-13 z" fill="#e02060"/>
 <path d="M17 5 h5 a2 2 0 0 1 4 0 h3 v7 a2 2 0 0 0 0 4 v3 h-12 z" fill="#f0c020"/>
 <path d="M4 17 h6 a2 2 0 0 1 4 0 h2 v10 h-12 z" fill="#2050c0"/>
 <path d="M15 16 h6 a2 2 0 0 1 4 0 h3 v11 h-13 z" fill="#60b030"/>
</svg>
<svg style="left:497px;top:1045px" width="30" height="30" viewBox="0 0 30 30">
 <circle cx="15" cy="15" r="14" fill="#dd4a3a"/>
 <path d="M15 15 L3 8.5 A14 14 0 0 0 8 27 Z" fill="#1ea64a"/>
 <path d="M15 15 L8 27 A14 14 0 0 0 29 15 H15Z" fill="#fbd22c"/>
 <path d="M15 15 L29 15 A14 14 0 0 0 27 8 Z" fill="#fbd22c"/>
 <circle cx="15" cy="15" r="6.4" fill="#fff"/><circle cx="15" cy="15" r="5" fill="#4c8ef0"/>
</svg>
<svg style="left:558px;top:1043px" width="31" height="34" viewBox="0 0 31 34">
 <path d="M2 0.5 L29.5 3 V31 L2 32.5 Z" fill="#f9bd12"/>
 <path d="M8 8 H24.5" stroke="#fffdf0" stroke-width="4.6" stroke-linecap="round"/>
 <path d="M17.5 16.5 H24 V26 H8.5" stroke="#fffdf0" stroke-width="4" fill="none" stroke-linejoin="round" stroke-linecap="round"/>
</svg>
<svg style="left:622px;top:1044px" width="33" height="32" viewBox="0 0 33 32">
 <path d="M9 1 C4 1 1 4.5 1 9 C1 11 1.5 12 2 13.5 C1.5 15 1.5 16 1.5 17 C1.5 24.5 7.5 30.5 15 30.5 C16 30.5 17 30.5 18 30 C19.5 30.8 21.5 31 23.5 31 C28 31 31.5 27.5 31.5 23 C31.5 21.5 31 20 30.5 18.5 C31 17.5 31 16.5 31 15.5 C31 8 25 2 17.5 2 C16.5 2 15.5 2 14.5 2.3 C13 1.5 11 1 9 1 Z" fill="#19a9ec"/>
 <path d="M22 12 C21 9 18.5 8 16 8 C12 8 10 10 10 12.5 C10 18 21.5 15.5 21.5 20 C21.5 22 19.5 23 16.5 23 C13 23 11.5 21 11 19" stroke="#fff" stroke-width="3.3" fill="none"/>
</svg>
<svg style="left:681px;top:1044px" width="32" height="32" viewBox="0 0 32 32">
 <rect x="1.5" y="1.5" width="25" height="29" fill="#f4f4f4" stroke="#c8c8c8"/>
 <rect x="3.5" y="3.5" width="21" height="20" fill="#3c64b0"/>
 <path d="M3.5 16 C9 12 14 15 24.5 10 V23.5 H3.5 Z" fill="#dfe8f8"/>
 <path d="M3.5 20 H24.5 V23.5 H3.5Z" fill="#101830"/>
 <path d="M29 6 L9 24" stroke="#a8283a" stroke-width="3"/><path d="M11 22 L7 27" stroke="#d8d0c0" stroke-width="3"/>
</svg>
<svg style="left:747px;top:1044px" width="32" height="32" viewBox="0 0 32 32">
 <circle cx="16" cy="16" r="15" fill="#a0a0a0"/>
 <circle cx="16" cy="16" r="13" fill="#c80e0e"/>
 <path d="M4 14 C6 5 26 5 28 14 C22 11 10 11 4 14 Z" fill="#f06060"/>
</svg>


<svg style="left:1715px;top:1058px" width="12" height="8" viewBox="0 0 12 8"><path d="M1 6.5 L6 1.5 L11 6.5 Z" fill="#e8f8fa"/></svg>
<svg style="left:1738px;top:1054px" width="15" height="15" viewBox="0 0 15 15"><path d="M0.5 2 L6.5 1 V7 H0.5 Z M7.5 0.8 L14.5 0 V7 H7.5 Z M0.5 8 H6.5 V14 L0.5 13 Z M7.5 8 H14.5 V15 L7.5 14.2 Z" fill="#f4fcfc"/></svg>
<svg style="left:1761px;top:1053px" width="16" height="16" viewBox="0 0 16 16"><path d="M1.5 1 V16" stroke="#f4fcfc" stroke-width="1.4"/><path d="M2.5 1.5 H8 L9 3 H15 L13 6 L15 9 H8.5 L7.5 7.5 H2.5 Z" fill="#f4fcfc"/></svg>
<svg style="left:1785px;top:1054px" width="16" height="15" viewBox="0 0 16 15"><circle cx="3" cy="3" r="2.2" fill="none" stroke="#f4fcfc" stroke-width="1.2"/><path d="M3 5.2 V13" stroke="#f4fcfc" stroke-width="1.2"/><rect x="6.5" y="2.5" width="8.5" height="7" fill="none" stroke="#f4fcfc" stroke-width="1.2"/><path d="M10.8 9.5 V12 M7.5 12.5 H14" stroke="#f4fcfc" stroke-width="1.2"/></svg>
<svg style="left:1809px;top:1054px" width="16" height="15" viewBox="0 0 16 15"><path d="M1 5 H4 L8 1 V14 L4 10 H1 Z" fill="#f4fcfc"/><path d="M10 4.5 C11.5 6 11.5 9 10 10.5 M12.5 2.5 C15 5 15 10 12.5 12.5" stroke="#f4fcfc" stroke-width="1.2" fill="none"/></svg>

<div class="t" id="t13" style="left:1858.00px;top:1046.77px;font-size:11.5px;color:#e2f6f8;transform:scaleX(0.9381);transform-origin:0 0;">21:37</div>
<div class="t" id="t14" style="left:1843.00px;top:1063.87px;font-size:11.5px;color:#e2f6f8;transform:scaleX(0.9902);transform-origin:0 0;">19/07/2015</div>

<svg style="left:17px;top:101px" width="40" height="66" viewBox="0 0 40 66">
 <rect x="1.5" y="1.5" width="8" height="8" fill="#f6f6f6" stroke="#9a9ab0"/>
 <path d="M3.5 5.5 H7.5 M5.5 3.5 V7.5" stroke="#202020" stroke-width="1"/>
 <path d="M10 5.5 H16" stroke="#808080" stroke-dasharray="1 1"/>
 <path d="M5.5 10 V59.5 M6 23.5 H16 M6 41.5 H16 M6 59.5 H16" stroke="#808080" stroke-dasharray="1 1"/>
</svg>
<svg style="left:33px;top:96px" width="17" height="18" viewBox="0 0 17 18">
 <path d="M8.5 1 L15.5 4.5 V13.5 L8.5 17 L1.5 13.5 V4.5 Z" fill="#2828f0"/>
 <path d="M8.5 1 L15.5 4.5 L8.5 8 L1.5 4.5 Z" fill="#5a5aff"/>
 <path d="M8.5 8 L15.5 4.5 V13.5 L8.5 17 Z" fill="#6a6aff"/>
 <path d="M8.5 8 L1.5 4.5 V13.5 L8.5 17 Z" fill="#1e1ee6"/>
</svg>
<svg style="left:35px;top:114px" width="13" height="18" viewBox="0 0 13 18">
 <path d="M4 1 H9 L12 4 V8 L9.5 11 H3.5 L1 8 V4 Z" fill="#efea78" stroke="#cfc640" stroke-width="1"/>
 <path d="M6.5 9 V5 C6.5 3.5 9 3.5 9 5.5" stroke="#d8c838" fill="none" stroke-width="0.9"/>
 <rect x="3.8" y="12" width="5.4" height="4" fill="#707070"/><rect x="4.8" y="13" width="3.4" height="2" fill="#e0e0e0"/>
</svg>
<svg style="left:35px;top:132px" width="13" height="18" viewBox="0 0 13 18">
 <path d="M4 1 H9 L12 4 V8 L9.5 11 H3.5 L1 8 V4 Z" fill="#efea78" stroke="#cfc640" stroke-width="1"/>
 <path d="M6.5 9 V5 C6.5 3.5 9 3.5 9 5.5" stroke="#d8c838" fill="none" stroke-width="0.9"/>
 <rect x="3.8" y="12" width="5.4" height="4" fill="#707070"/><rect x="4.8" y="13" width="3.4" height="2" fill="#e0e0e0"/>
</svg>
<svg style="left:32px;top:152px" width="18" height="14" viewBox="0 0 18 14">
 <circle cx="4.5" cy="4" r="3.4" fill="#000"/><circle cx="11.5" cy="4" r="3.4" fill="#000"/>
 <rect x="3.5" y="5.5" width="9.5" height="6.5" fill="#000"/>
 <path d="M12.5 8 L17 6 V13 L12.5 11 Z" fill="#000"/>
</svg>

<div class="t" id="t15" style="left:53.80px;top:99.24px;font-size:12px;color:#000;transform:scaleX(0.9487);transform-origin:0 0;">Mailleux_MX6000</div>
<div class="t" id="t16" style="left:53.80px;top:117.04px;font-size:12px;color:#000;transform:scaleX(1.0538);transform-origin:0 0;">light</div>
<div class="t" id="t17" style="left:53.80px;top:135.04px;font-size:12px;color:#000;transform:scaleX(1.0538);transform-origin:0 0;">light</div>
<div class="t" id="t18" style="left:53.80px;top:152.74px;font-size:12px;color:#000;transform:scaleX(0.9490);transform-origin:0 0;">persp</div>
<div class="a" style="left:1173px;top:94px;width:406px;height:20px;background:linear-gradient(#fbfbfb,#e8e8e8 30%,#c4c4c4 75%,#a9a9a9)"></div>
<div class="t" id="t19" style="left:1176.80px;top:97.74px;font-size:12px;color:#000;transform:scaleX(0.9886);transform-origin:0 0;">Material</div>
<svg style="left:1562px;top:98px" width="10" height="11" viewBox="0 0 10 11"><path d="M0.5 1 H9.5 L5 10 Z M0.5 1 H9.5 V3 H0.5Z M2 4 H8 V6 H2Z" fill="#000"/></svg>
<div class="a" style="left:1579px;top:95px;width:17px;height:929px;background:#efefef;border-left:1px solid #fafafa"></div>
<div class="a" style="left:1580px;top:112px;width:15px;height:777px;background:#cdcdcd"></div>
<svg style="left:1582px;top:100px" width="11" height="8" viewBox="0 0 11 8"><path d="M1.5 6.5 L5.5 2.5 L9.5 6.5" stroke="#606060" stroke-width="2" fill="none"/></svg>
<svg style="left:1582px;top:1012px" width="11" height="8" viewBox="0 0 11 8"><path d="M1.5 1.5 L5.5 5.5 L9.5 1.5" stroke="#606060" stroke-width="2" fill="none"/></svg>
<div class="t" id="t20" style="left:1222.00px;top:127.54px;font-size:12px;color:#000;transform:scaleX(1.0190);transform-origin:0 0;">Material</div>
<div class="t" id="t21" style="left:1186.00px;top:155.34px;font-size:12px;color:#000;transform:scaleX(0.9986);transform-origin:0 0;">Diffuse Texture</div>
<div class="t" id="t22" style="left:1195.90px;top:183.24px;font-size:12px;color:#000;transform:scaleX(1.0066);transform-origin:0 0;">Diffuse Color</div>
<div class="t" id="t23" style="left:1187.00px;top:211.44px;font-size:12px;color:#000;transform:scaleX(1.0325);transform-origin:0 0;">Ambient Color</div>
<div class="t" id="t24" style="left:1187.80px;top:239.24px;font-size:12px;color:#000;transform:scaleX(0.9789);transform-origin:0 0;">Specular Color</div>
<div class="t" id="t25" style="left:1209.00px;top:265.14px;font-size:12px;color:#000;transform:scaleX(0.9627);transform-origin:0 0;">Cos Power</div>
<div class="t" id="t26" style="left:1178.00px;top:292.64px;font-size:12px;color:#000;transform:scaleX(0.9739);transform-origin:0 0;">Specular Texture</div>
<div class="t" id="t27" style="left:1183.00px;top:320.64px;font-size:12px;color:#000;transform:scaleX(1.0168);transform-origin:0 0;">Normal Texture</div>
<div class="t" id="t28" style="left:1197.90px;top:346.24px;font-size:12px;color:#000;transform:scaleX(1.0134);transform-origin:0 0;">Bump Depth</div>
<div class="t" id="t29" style="left:1178.00px;top:373.44px;font-size:12px;color:#000;transform:scaleX(0.9670);transform-origin:0 0;">Emissive Texture</div>
<div class="t" id="t30" style="left:1210.10px;top:401.64px;font-size:12px;color:#000;transform:scaleX(1.0005);transform-origin:0 0;">Cube Map</div>
<div class="t" id="t31" style="left:1184.20px;top:423.64px;font-size:12px;color:#000;transform:scaleX(1.0070);transform-origin:0 0;">Alpha Blending</div>
<div class="t" id="t32" style="left:1242.10px;top:445.24px;font-size:12px;color:#000;transform:scaleX(0.9478);transform-origin:0 0;">Refl.</div>
<div class="a" style="left:1268px;top:123px;width:108px;height:23px;background:#ececec;border:1px solid #d4d4d4"></div>
<svg style="left:1362px;top:131px" width="9" height="6" viewBox="0 0 9 6"><path d="M1 1 L4.5 4.5 L8 1" stroke="#b0b0b0" stroke-width="1.4" fill="none"/></svg>
<div class="a" style="left:1268px;top:150px;width:110px;height:22px;background:#f0f0f0;border:1px solid #d9d9d9;box-shadow:inset 1px 1px 0 #fbfbfb"></div>
<div class="a" style="left:1379px;top:150px;width:22px;height:23px;background:#efefef;border:1px solid #dadada;box-shadow:inset 1px 1px 0 #fafafa"></div>
<div class="a" style="left:1388px;top:164px;width:1px;height:1px;background:#555"></div>
<div class="a" style="left:1390px;top:164px;width:1px;height:1px;background:#555"></div>
<div class="a" style="left:1393px;top:164px;width:1px;height:1px;background:#555"></div>
<div class="a" style="left:1403px;top:151px;width:22px;height:21px;background:#efefef;border:1px solid #dadada;box-shadow:inset 1px 1px 0 #fafafa"></div>
<svg style="left:1407px;top:154px" width="15" height="15" viewBox="0 0 15 15"><path d="M2 13.5 C4 9 8 4 13.5 1.5 M3 2.5 C6 6 9 9.5 12 13" stroke="#e08d9a" stroke-width="1.6" fill="none"/></svg>
<div class="a" style="left:1268px;top:177px;width:49px;height:23px;background:#efefef;border:1px solid #a2a2a2;box-shadow:inset 0 0 0 3px #fdfdfd"></div>
<div class="t" id="t33" style="left:1272.40px;top:183.04px;font-size:12px;color:#7a7a7a;">0</div>
<div class="a" style="left:1318px;top:178px;width:21px;height:21px;background:#ececec;border:1px solid #d6d6d6"></div>
<svg style="left:1322px;top:184px" width="13" height="9" viewBox="0 0 13 9"><path d="M0.5 4 L4.5 0.5 V7.5 Z M8 0.5 L12 4 L8 7.5Z" fill="#000"/></svg>
<div class="a" style="left:1340px;top:177px;width:49px;height:23px;background:#efefef;border:1px solid #a2a2a2;box-shadow:inset 0 0 0 3px #fdfdfd"></div>
<div class="t" id="t34" style="left:1344.40px;top:183.04px;font-size:12px;color:#7a7a7a;">0</div>
<div class="a" style="left:1390px;top:178px;width:21px;height:21px;background:#ececec;border:1px solid #d6d6d6"></div>
<svg style="left:1394px;top:184px" width="13" height="9" viewBox="0 0 13 9"><path d="M0.5 4 L4.5 0.5 V7.5 Z M8 0.5 L12 4 L8 7.5Z" fill="#000"/></svg>
<div class="a" style="left:1412px;top:177px;width:49px;height:23px;background:#efefef;border:1px solid #a2a2a2;box-shadow:inset 0 0 0 3px #fdfdfd"></div>
<div class="t" id="t35" style="left:1416.40px;top:183.04px;font-size:12px;color:#7a7a7a;">0</div>
<div class="a" style="left:1462px;top:178px;width:21px;height:21px;background:#ececec;border:1px solid #d6d6d6"></div>
<svg style="left:1466px;top:184px" width="13" height="9" viewBox="0 0 13 9"><path d="M0.5 4 L4.5 0.5 V7.5 Z M8 0.5 L12 4 L8 7.5Z" fill="#000"/></svg>
<div class="a" style="left:1485px;top:177px;width:14px;height:23px;background:#efefef;border:1px solid #dcdcdc"></div>
<div class="a" style="left:1489px;top:191px;width:1px;height:1px;background:#777"></div>
<div class="a" style="left:1491px;top:191px;width:1px;height:1px;background:#777"></div>
<div class="a" style="left:1493px;top:191px;width:1px;height:1px;background:#777"></div>
<div class="a" style="left:1268px;top:205px;width:49px;height:23px;background:#efefef;border:1px solid #a2a2a2;box-shadow:inset 0 0 0 3px #fdfdfd"></div>
<div class="t" id="t36" style="left:1272.40px;top:211.04px;font-size:12px;color:#7a7a7a;">0</div>
<div class="a" style="left:1318px;top:206px;width:21px;height:21px;background:#ececec;border:1px solid #d6d6d6"></div>
<svg style="left:1322px;top:212px" width="13" height="9" viewBox="0 0 13 9"><path d="M0.5 4 L4.5 0.5 V7.5 Z M8 0.5 L12 4 L8 7.5Z" fill="#000"/></svg>
<div class="a" style="left:1340px;top:205px;width:49px;height:23px;background:#efefef;border:1px solid #a2a2a2;box-shadow:inset 0 0 0 3px #fdfdfd"></div>
<div class="t" id="t37" style="left:1344.40px;top:211.04px;font-size:12px;color:#7a7a7a;">0</div>
<div class="a" style="left:1390px;top:206px;width:21px;height:21px;background:#ececec;border:1px solid #d6d6d6"></div>
<svg style="left:1394px;top:212px" width="13" height="9" viewBox="0 0 13 9"><path d="M0.5 4 L4.5 0.5 V7.5 Z M8 0.5 L12 4 L8 7.5Z" fill="#000"/></svg>
<div class="a" style="left:1412px;top:205px;width:49px;height:23px;background:#efefef;border:1px solid #a2a2a2;box-shadow:inset 0 0 0 3px #fdfdfd"></div>
<div class="t" id="t38" style="left:1416.40px;top:211.04px;font-size:12px;color:#7a7a7a;">0</div>
<div class="a" style="left:1462px;top:206px;width:21px;height:21px;background:#ececec;border:1px solid #d6d6d6"></div>
<svg style="left:1466px;top:212px" width="13" height="9" viewBox="0 0 13 9"><path d="M0.5 4 L4.5 0.5 V7.5 Z M8 0.5 L12 4 L8 7.5Z" fill="#000"/></svg>
<div class="a" style="left:1485px;top:205px;width:14px;height:23px;background:#efefef;border:1px solid #dcdcdc"></div>
<div class="a" style="left:1489px;top:219px;width:1px;height:1px;background:#777"></div>
<div class="a" style="left:1491px;top:219px;width:1px;height:1px;background:#777"></div>
<div class="a" style="left:1493px;top:219px;width:1px;height:1px;background:#777"></div>
<div class="a" style="left:1268px;top:233px;width:49px;height:23px;background:#efefef;border:1px solid #a2a2a2;box-shadow:inset 0 0 0 3px #fdfdfd"></div>
<div class="t" id="t39" style="left:1272.40px;top:239.04px;font-size:12px;color:#7a7a7a;">0</div>
<div class="a" style="left:1318px;top:234px;width:21px;height:21px;background:#ececec;border:1px solid #d6d6d6"></div>
<svg style="left:1322px;top:240px" width="13" height="9" viewBox="0 0 13 9"><path d="M0.5 4 L4.5 0.5 V7.5 Z M8 0.5 L12 4 L8 7.5Z" fill="#000"/></svg>
<div class="a" style="left:1340px;top:233px;width:49px;height:23px;background:#efefef;border:1px solid #a2a2a2;box-shadow:inset 0 0 0 3px #fdfdfd"></div>
<div class="t" id="t40" style="left:1344.40px;top:239.04px;font-size:12px;color:#7a7a7a;">0</div>
<div class="a" style="left:1390px;top:234px;width:21px;height:21px;background:#ececec;border:1px solid #d6d6d6"></div>
<svg style="left:1394px;top:240px" width="13" height="9" viewBox="0 0 13 9"><path d="M0.5 4 L4.5 0.5 V7.5 Z M8 0.5 L12 4 L8 7.5Z" fill="#000"/></svg>
<div class="a" style="left:1412px;top:233px;width:49px;height:23px;background:#efefef;border:1px solid #a2a2a2;box-shadow:inset 0 0 0 3px #fdfdfd"></div>
<div class="t" id="t41" style="left:1416.40px;top:239.04px;font-size:12px;color:#7a7a7a;">0</div>
<div class="a" style="left:1462px;top:234px;width:21px;height:21px;background:#ececec;border:1px solid #d6d6d6"></div>
<svg style="left:1466px;top:240px" width="13" height="9" viewBox="0 0 13 9"><path d="M0.5 4 L4.5 0.5 V7.5 Z M8 0.5 L12 4 L8 7.5Z" fill="#000"/></svg>
<div class="a" style="left:1485px;top:233px;width:14px;height:23px;background:#efefef;border:1px solid #dcdcdc"></div>
<div class="a" style="left:1489px;top:247px;width:1px;height:1px;background:#777"></div>
<div class="a" style="left:1491px;top:247px;width:1px;height:1px;background:#777"></div>
<div class="a" style="left:1493px;top:247px;width:1px;height:1px;background:#777"></div>
<div class="a" style="left:1268px;top:260px;width:49px;height:23px;background:#efefef;border:1px solid #a2a2a2;box-shadow:inset 0 0 0 3px #fdfdfd"></div>
<div class="t" id="t42" style="left:1272.40px;top:266.04px;font-size:12px;color:#7a7a7a;">0</div>
<div class="a" style="left:1318px;top:261px;width:21px;height:21px;background:#ececec;border:1px solid #d6d6d6"></div>
<svg style="left:1322px;top:267px" width="13" height="9" viewBox="0 0 13 9"><path d="M0.5 4 L4.5 0.5 V7.5 Z M8 0.5 L12 4 L8 7.5Z" fill="#000"/></svg>
<div class="a" style="left:1268px;top:287px;width:110px;height:22px;background:#f0f0f0;border:1px solid #d9d9d9;box-shadow:inset 1px 1px 0 #fbfbfb"></div>
<div class="a" style="left:1379px;top:287px;width:22px;height:23px;background:#efefef;border:1px solid #dadada;box-shadow:inset 1px 1px 0 #fafafa"></div>
<div class="a" style="left:1388px;top:301px;width:1px;height:1px;background:#555"></div>
<div class="a" style="left:1390px;top:301px;width:1px;height:1px;background:#555"></div>
<div class="a" style="left:1393px;top:301px;width:1px;height:1px;background:#555"></div>
<div class="a" style="left:1403px;top:288px;width:22px;height:21px;background:#efefef;border:1px solid #dadada;box-shadow:inset 1px 1px 0 #fafafa"></div>
<svg style="left:1407px;top:291px" width="15" height="15" viewBox="0 0 15 15"><path d="M2 13.5 C4 9 8 4 13.5 1.5 M3 2.5 C6 6 9 9.5 12 13" stroke="#e08d9a" stroke-width="1.6" fill="none"/></svg>
<div class="a" style="left:1268px;top:315px;width:110px;height:22px;background:#f0f0f0;border:1px solid #d9d9d9;box-shadow:inset 1px 1px 0 #fbfbfb"></div>
<div class="a" style="left:1379px;top:315px;width:22px;height:23px;background:#efefef;border:1px solid #dadada;box-shadow:inset 1px 1px 0 #fafafa"></div>
<div class="a" style="left:1388px;top:329px;width:1px;height:1px;background:#555"></div>
<div class="a" style="left:1390px;top:329px;width:1px;height:1px;background:#555"></div>
<div class="a" style="left:1393px;top:329px;width:1px;height:1px;background:#555"></div>
<div class="a" style="left:1403px;top:316px;width:22px;height:21px;background:#efefef;border:1px solid #dadada;box-shadow:inset 1px 1px 0 #fafafa"></div>
<svg style="left:1407px;top:319px" width="15" height="15" viewBox="0 0 15 15"><path d="M2 13.5 C4 9 8 4 13.5 1.5 M3 2.5 C6 6 9 9.5 12 13" stroke="#e08d9a" stroke-width="1.6" fill="none"/></svg>
<div class="a" style="left:1268px;top:341px;width:49px;height:23px;background:#efefef;border:1px solid #a2a2a2;box-shadow:inset 0 0 0 3px #fdfdfd"></div>
<div class="t" id="t43" style="left:1272.40px;top:347.04px;font-size:12px;color:#7a7a7a;">0</div>
<div class="a" style="left:1318px;top:342px;width:21px;height:21px;background:#ececec;border:1px solid #d6d6d6"></div>
<svg style="left:1322px;top:348px" width="13" height="9" viewBox="0 0 13 9"><path d="M0.5 4 L4.5 0.5 V7.5 Z M8 0.5 L12 4 L8 7.5Z" fill="#000"/></svg>
<div class="a" style="left:1268px;top:368px;width:110px;height:22px;background:#f0f0f0;border:1px solid #d9d9d9;box-shadow:inset 1px 1px 0 #fbfbfb"></div>
<div class="a" style="left:1379px;top:368px;width:22px;height:23px;background:#efefef;border:1px solid #dadada;box-shadow:inset 1px 1px 0 #fafafa"></div>
<div class="a" style="left:1388px;top:382px;width:1px;height:1px;background:#555"></div>
<div class="a" style="left:1390px;top:382px;width:1px;height:1px;background:#555"></div>
<div class="a" style="left:1393px;top:382px;width:1px;height:1px;background:#555"></div>
<div class="a" style="left:1403px;top:369px;width:22px;height:21px;background:#efefef;border:1px solid #dadada;box-shadow:inset 1px 1px 0 #fafafa"></div>
<svg style="left:1407px;top:372px" width="15" height="15" viewBox="0 0 15 15"><path d="M2 13.5 C4 9 8 4 13.5 1.5 M3 2.5 C6 6 9 9.5 12 13" stroke="#e08d9a" stroke-width="1.6" fill="none"/></svg>
<div class="a" style="left:1268px;top:396px;width:110px;height:22px;background:#f0f0f0;border:1px solid #d9d9d9;box-shadow:inset 1px 1px 0 #fbfbfb"></div>
<div class="a" style="left:1379px;top:396px;width:22px;height:23px;background:#efefef;border:1px solid #dadada;box-shadow:inset 1px 1px 0 #fafafa"></div>
<div class="a" style="left:1388px;top:410px;width:1px;height:1px;background:#555"></div>
<div class="a" style="left:1390px;top:410px;width:1px;height:1px;background:#555"></div>
<div class="a" style="left:1393px;top:410px;width:1px;height:1px;background:#555"></div>
<div class="a" style="left:1403px;top:397px;width:22px;height:21px;background:#efefef;border:1px solid #dadada;box-shadow:inset 1px 1px 0 #fafafa"></div>
<svg style="left:1407px;top:400px" width="15" height="15" viewBox="0 0 15 15"><path d="M2 13.5 C4 9 8 4 13.5 1.5 M3 2.5 C6 6 9 9.5 12 13" stroke="#e08d9a" stroke-width="1.6" fill="none"/></svg>
<div class="a" style="left:1268px;top:424px;width:13px;height:12px;background:#e8e8e8;border:1px solid #c8c8c8"></div>
<div class="a" style="left:1268px;top:441px;width:110px;height:22px;background:#f0f0f0;border:1px solid #d9d9d9;box-shadow:inset 1px 1px 0 #fbfbfb"></div>
<div class="a" style="left:1173px;top:464px;width:406px;height:20px;background:linear-gradient(#fbfbfb,#e8e8e8 30%,#c4c4c4 75%,#a9a9a9)"></div>
<div class="t" id="t44" style="left:1176.60px;top:468.24px;font-size:12px;color:#000;transform:scaleX(0.9667);transform-origin:0 0;">Custom Shader</div>
<svg style="left:1562px;top:468px" width="10" height="10" viewBox="0 0 10 10"><path d="M5 1 L9.5 9.5 H0.5 Z" fill="#000"/></svg>
</body></html>
